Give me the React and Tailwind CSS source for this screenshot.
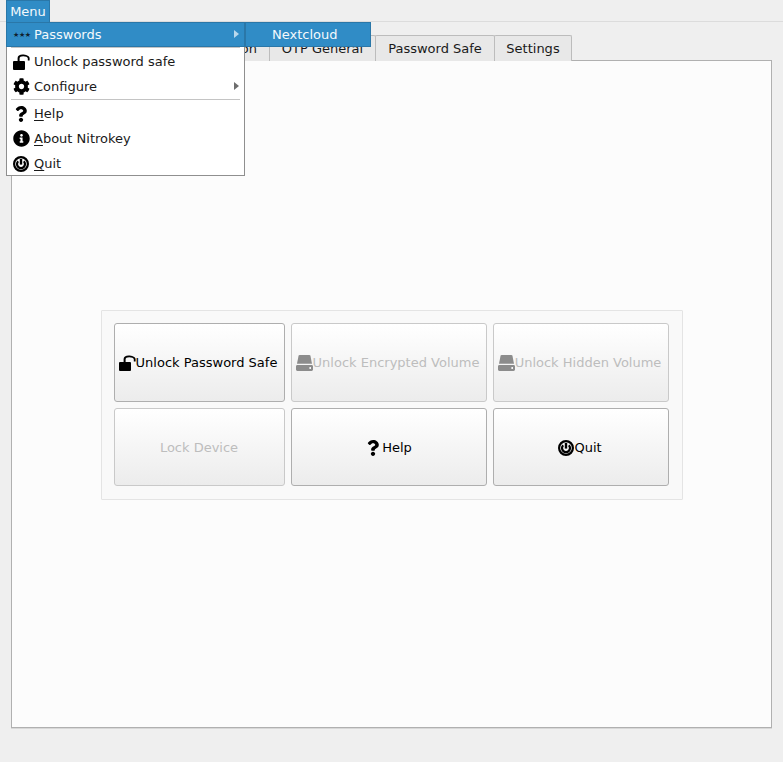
import { FaCog, FaInfoCircle, FaQuestion } from 'react-icons/fa'

function UnlockIcon({ className }) {
  return (
    <svg viewBox="0 0 17 16" className={className} fill="currentColor">
      <rect x="0" y="7" width="12" height="9" rx="1" />
      <path d="M4.6 7V4C4.6 1.8 6.6 0.4 9.6 0.4S16.6 1.8 16.6 4V6.4H14.8V4.2C14.8 2.9 12.6 2.2 10.2 2.2S6.6 2.9 6.6 4.2V7Z" />
    </svg>
  )
}

function DriveIcon({ className }) {
  return (
    <svg viewBox="0 0 17 16" className={className} fill="currentColor">
      <path d="M2.6 0.6C2.8 0.2 3.2 0 3.6 0H13.4C13.8 0 14.2 0.2 14.4 0.6L16 8.8H1Z" />
      <path fillRule="evenodd" d="M1.4 10H15.6C16.4 10 17 10.6 17 11.4V14.6C17 15.4 16.4 16 15.6 16H1.4C0.6 16 0 15.4 0 14.6V11.4C0 10.6 0.6 10 1.4 10ZM13.4 12V14H15V12Z" />
    </svg>
  )
}

function PowerIcon({ className }) {
  return (
    <svg viewBox="0 0 16 16" className={className} fill="none" stroke="currentColor">
      <circle cx="8" cy="8" r="6.9" strokeWidth="2.2" />
      <path d="M5.2 5.2A4 4 0 1 0 10.8 5.2" strokeWidth="2.2" />
      <path d="M8 3V8.6" strokeWidth="2.4" />
    </svg>
  )
}

function Arrow({ className }) {
  return (
    <svg viewBox="0 0 5 8" className={`w-[5px] h-[8px] ${className}`} fill="currentColor">
      <path d="M0 0L5 4L0 8Z" />
    </svg>
  )
}

function MenuRow({ icon, children, arrow }) {
  return (
    <div className="flex items-center h-[25px] relative">
      <div className="w-[27px] flex justify-center pl-[1px] shrink-0">{icon}</div>
      <span>{children}</span>
      {arrow && <Arrow className="absolute right-[5px] top-[8px] text-[#6e6e6e]" />}
    </div>
  )
}

function Tab({ width, className, children }) {
  return (
    <div className={`${width} h-[26px] mb-[-1px] bg-[#e8e8e8] border border-[#bcbcbc] border-b-0 rounded-t-[2px] flex items-center -ml-px first:ml-0 ${className || 'justify-center'}`}>
      {children}
    </div>
  )
}

function ActionButton({ icon, disabled, children, className }) {
  return (
    <div
      className={`flex items-center justify-center rounded-[3px] border bg-gradient-to-b from-[#ffffff] to-[#ececec] ${
        disabled ? 'border-[#c9c9c9] text-[#bdbdbd]' : 'border-[#aeaeae] text-black'
      } ${className || ''}`}
    >
      {icon}
      <span>{children}</span>
    </div>
  )
}

export default function App() {
  return (
    <div className="relative w-[783px] h-[762px] bg-[#efefef] text-[13px] leading-[16px] text-[#1a1a1a] overflow-hidden font-['DejaVu_Sans',sans-serif]">
      {/* Menu bar */}
      <div className="h-[22px] border-b border-[#dcdcdc] pl-[6px]">
        <div className="w-[44px] h-[22px] bg-[#308cc6] border border-[#2a77a8] border-b-0 text-[#f4f9fc] flex items-center justify-center">
          Menu
        </div>
      </div>

      {/* Tabs */}
      <div className="pl-[11px] pr-[11px] pt-[13px]">
        <div className="flex pl-[1px] relative z-10">
          <Tab width="w-[258px]" className="justify-end pr-[12px]">on</Tab>
          <Tab width="w-[107px]">OTP General</Tab>
          <Tab width="w-[120px]">Password Safe</Tab>
          <Tab width="w-[78px]">Settings</Tab>
        </div>

        <div className="h-[668px] bg-[#fcfcfc] border border-[#b0b0b0] shadow-[0_1px_0_#d8d8d8] flex items-center justify-center pt-[22px]">
          <div className="w-[582px] bg-[#f9f9f9] border border-[#e4e4e4] rounded-[1px] pl-[12px] pt-[12px] pb-[13px]">
            <div className="grid grid-cols-[171px_196px_176px] grid-rows-[79px_78px] gap-[6px]">
              <ActionButton className="pr-[2px]" icon={<UnlockIcon className="w-[17px] h-[16px]" />}>Unlock Password Safe</ActionButton>
              <ActionButton className="pr-[2px]" disabled icon={<DriveIcon className="w-[17px] h-[16px] text-[#8c8c8c]" />}>Unlock Encrypted Volume</ActionButton>
              <ActionButton className="pr-[2px]" disabled icon={<DriveIcon className="w-[17px] h-[16px] text-[#8c8c8c]" />}>Unlock Hidden Volume</ActionButton>
              <ActionButton disabled className="pt-px">Lock Device</ActionButton>
              <ActionButton className="pt-px" icon={<FaQuestion className="w-[16px] h-[16px] mr-[1px]" />}>Help</ActionButton>
              <ActionButton className="pt-px pr-px" icon={<PowerIcon className="w-[16px] h-[16px]" />}>Quit</ActionButton>
            </div>
          </div>
        </div>
      </div>

      {/* Open menu */}
      <div className="absolute z-20 left-[6px] top-[22px] w-[239px] h-[154px] bg-white border border-[#8f8f8f] border-t-0">
        <div className="-mx-px h-[25px] bg-[#308cc6] border border-[#2a77a8] text-[#f4f9fc] flex items-center relative">
          <div className="w-[28px] pl-[6px] shrink-0 text-[7px] leading-[8px] text-[#10202c] tracking-[-0.4px] font-bold">★★★</div>
          <span className="ml-[-1px]">Passwords</span>
          <Arrow className="absolute right-[5px] top-[7px] text-[#b9d8ec]" />
        </div>
        <div className="mx-[4px] h-px bg-[#c4c4c4]" />
        <div className="h-[1px]" />
        <MenuRow icon={<UnlockIcon className="w-[17px] h-[16px] text-black" />}>Unlock password safe</MenuRow>
        <MenuRow icon={<FaCog className="w-[17px] h-[17px] text-black" />} arrow>Configure</MenuRow>
        <div className="mx-[4px] h-px bg-[#c4c4c4]" />
        <div className="h-px" />
        <MenuRow icon={<FaQuestion className="w-[16px] h-[16px] text-black" />}>
          <u className="underline-offset-2">H</u>elp
        </MenuRow>
        <MenuRow icon={<FaInfoCircle className="w-[17px] h-[17px] text-black" />}>
          <u className="underline-offset-2">A</u>bout Nitrokey
        </MenuRow>
        <MenuRow icon={<PowerIcon className="w-[16px] h-[16px] text-black" />}>
          <u className="underline-offset-2">Q</u>uit
        </MenuRow>
      </div>

      {/* Submenu */}
      <div className="absolute z-20 left-[245px] top-[22px] w-[126px] h-[25px] bg-[#308cc6] border border-[#2a77a8] text-[#f4f9fc] flex items-center pl-[26px]">
        Nextcloud
      </div>
    </div>
  )
}
